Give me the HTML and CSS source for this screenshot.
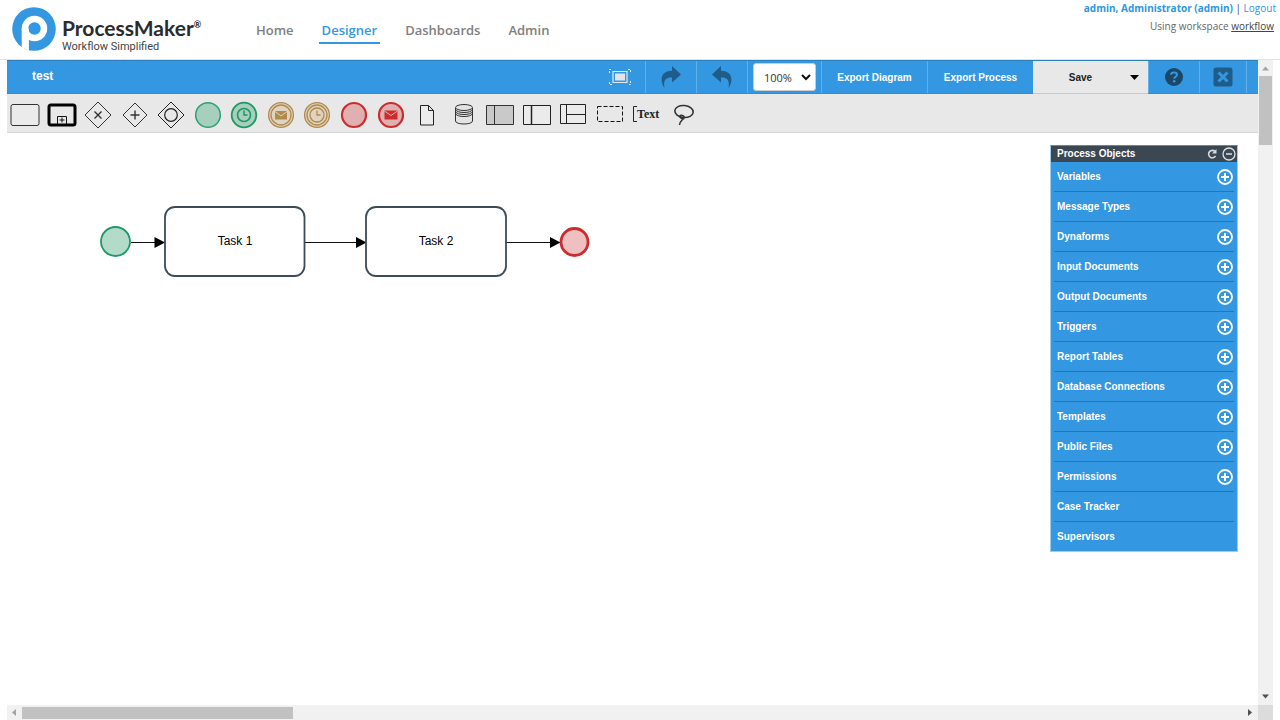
FILE: index.html
```html
<!DOCTYPE html>
<html lang="en">
<head>
<meta charset="utf-8">
<title>ProcessMaker Designer</title>
<link rel="stylesheet" href="styles.css">
</head>
<body>
<header class="header">
  <a class="brand" href="#" aria-label="ProcessMaker home">
    <svg class="brand-mark" viewBox="0 0 44 44" aria-hidden="true">
      <circle cx="22" cy="22" r="21.8" fill="#3397e1"/>
      <circle cx="22.500" cy="21.500" r="9.500" fill="none" stroke="#fff" stroke-width="6.500"/>
      <path d="M9.700 21.500h7.200V43.500l-7.200-3z" fill="#fff"/>
    </svg>
    <span class="brand-text">
      <span class="brand-name">ProcessMaker<span class="brand-reg">®</span></span>
      <span class="brand-tag">Workflow Simplified</span>
    </span>
  </a>
  <nav class="nav">
    <a class="nav-link" href="#">Home</a>
    <a class="nav-link nav-active" href="#">Designer</a>
    <a class="nav-link" href="#">Dashboards</a>
    <a class="nav-link" href="#">Admin</a>
  </nav>
  <div class="account">
    <div><a class="account-user" href="#">admin, Administrator (admin)</a> | <a class="account-out" href="#">Logout</a></div>
    <div class="account-space">Using workspace <a class="account-flow" href="#">workflow</a></div>
  </div>
</header>

<main class="workspace">
  <div class="designer">
    <div class="bar">
      <h1 class="bar-title">test</h1>
      <button class="bar-btn bar-plain" aria-label="Full screen">
        <svg width="24" height="18" viewBox="0 0 24 18" fill="none" stroke="#dce9f4"><path d="M1.500 5V1.500H4M20 1.500h2.500V5M22.500 13v3.500H20M4 16.500H1.500V13" stroke-dasharray="2 1"/><path d="M5 3.500h14v11H5z" stroke-width="1.200"/><path d="M7 5.500h10v7H7z" fill="#e4e4e4" stroke="none"/></svg>
      </button>
      <button class="bar-btn" aria-label="Redo">
        <svg width="20" height="22" viewBox="0 0 20 22"><path fill="#205c89" d="M11 0l9 8.500-9 8v-5C5 11 2 14 3.500 22 -1 16-1.500 5 11 4.800z"/></svg>
      </button>
      <button class="bar-btn" aria-label="Undo">
        <svg width="20" height="22" viewBox="0 0 20 22"><path fill="#205c89" d="M9 0L0 8.500l9 8v-5c6-.5 9 2.500 7.500 10.500C21 16 21.500 5 9 4.800z"/></svg>
      </button>
      <div class="bar-zoom">
        <select class="zoom" aria-label="Zoom"><option>100%</option><option>75%</option><option>50%</option></select>
        <svg class="zoom-arrow" width="10" height="7" viewBox="0 0 10 7" aria-hidden="true"><path d="M1 1l4 4 4-4" fill="none" stroke="#111" stroke-width="2"/></svg>
      </div>
      <button class="bar-btn bar-wide">Export Diagram</button>
      <button class="bar-btn bar-wide">Export Process</button>
      <div class="save">
        <button class="save-main">Save</button>
        <button class="save-more" aria-label="More save options"><svg width="9" height="5" viewBox="0 0 9 5"><path d="M0 0h9L4.500 5z"/></svg></button>
      </div>
      <button class="bar-btn" aria-label="Help">
        <svg width="18" height="18" viewBox="0 0 18 18"><circle cx="9" cy="9" r="9" fill="#1c4767"/><path d="M6 6.700C6.200 3.600 12 3.600 12 6.800c0 2-2.800 2-2.800 4" fill="none" stroke="#3397e1" stroke-width="2"/><circle cx="9.200" cy="13.200" r="1.300" fill="#3397e1"/></svg>
      </button>
      <button class="bar-btn bar-close" aria-label="Close">
        <svg width="20" height="20" viewBox="0 0 20 20"><rect x=".5" y=".5" width="19" height="19" rx="2.500" fill="#205c89"/><path d="M5.500 5.500l9 9M14.500 5.500l-9 9" stroke="#3397e1" stroke-width="3"/></svg>
      </button>
      <div class="bar-end"></div>
    </div>

    <div class="palette">
      <button class="shape" aria-label="Task"><svg viewBox="0 0 30 30"><rect x="1" y="4.500" width="28" height="21" rx="2" fill="#ebebeb" stroke="#333"/></svg></button>
      <button class="shape" aria-label="Sub process"><svg viewBox="0 0 30 30"><rect x="2" y="5" width="26" height="20" rx="2" fill="none" stroke="#000" stroke-width="3"/><path d="M10.500 24v-7.500h9V24M15 17.500v5M12.500 20h5" fill="none" stroke="#111"/></svg></button>
      <button class="shape" aria-label="Exclusive gateway"><svg viewBox="0 0 30 30" fill="none" stroke="#333"><path d="M15 2l13 13-13 13L2 15z"/><path d="M11.500 11.500l7 7M18.500 11.500l-7 7" stroke-width="1.400"/></svg></button>
      <button class="shape" aria-label="Parallel gateway"><svg viewBox="0 0 30 30" fill="none" stroke="#333"><path d="M15 3l12 12-12 12L3 15z"/><path d="M15 10.500v9M10.500 15h9" stroke-width="1.400"/></svg></button>
      <button class="shape" aria-label="Inclusive gateway"><svg viewBox="0 0 30 30" fill="none" stroke="#222"><path d="M15 2l13 13-13 13L2 15z"/><circle cx="15" cy="15" r="6.300" stroke-width="1.200"/></svg></button>
      <button class="shape" aria-label="Start event"><svg viewBox="0 0 30 30"><circle cx="15" cy="15" r="12.300" fill="#a6cfbd" stroke="#2ba071" stroke-width="1.500"/></svg></button>
      <button class="shape" aria-label="Start timer event"><svg viewBox="0 0 30 30" fill="none" stroke="#1f9865"><circle cx="15" cy="15" r="12.300" fill="#a6cfbd" stroke-width="1.800"/><circle cx="15" cy="15" r="6.500" stroke-width="1.600"/><path d="M15 10.500V15h3.500" stroke-width="1.500"/></svg></button>
      <button class="shape" aria-label="Intermediate message event"><svg viewBox="0 0 30 30" fill="none" stroke="#b18a4d"><circle cx="15" cy="15" r="12.400" fill="#dfd4c0" stroke-width="1.300"/><circle cx="15" cy="15" r="10" stroke-width="1.300"/><path d="M9 11h12v8.500H9z" fill="#b18a4d" stroke="none"/><path d="M9 11.500l6 4.500 6-4.500" stroke="#dfd4c0"/></svg></button>
      <button class="shape" aria-label="Intermediate timer event"><svg viewBox="0 0 30 30" fill="none" stroke="#b18a4d"><circle cx="15" cy="15" r="12.400" fill="#dfd4c0" stroke-width="1.300"/><circle cx="15" cy="15" r="10" stroke-width="1.300"/><circle cx="15" cy="15" r="7" stroke-width="1.300"/><path d="M15 10.500V15h3.500" stroke-width="1.300"/></svg></button>
      <button class="shape" aria-label="End event"><svg viewBox="0 0 30 30"><circle cx="15" cy="15" r="12" fill="#e0afaf" stroke="#cb2d2f" stroke-width="2.200"/></svg></button>
      <button class="shape" aria-label="End message event"><svg viewBox="0 0 30 30"><circle cx="15" cy="15" r="12" fill="#e0afaf" stroke="#cb2d2f" stroke-width="2.200"/><path d="M8.500 10.500h13v9h-13z" fill="#cb2d2f"/><path d="M8.500 11l6.500 4.500 6.500-4.500" fill="none" stroke="#e0afaf"/></svg></button>
      <button class="shape" aria-label="Data object"><svg viewBox="0 0 30 30" fill="#ececec" stroke="#222"><path d="M8.500 5.500h8l5 5v14.500h-13zM16.500 5.500v5h5"/></svg></button>
      <button class="shape" aria-label="Data store"><svg viewBox="0 0 30 30" fill="#e3e3e3" stroke="#333"><path d="M6.500 8v13c0 4 17 4 17 0V8"/><ellipse cx="15" cy="7.500" rx="8.500" ry="3"/><path d="M6.500 9.500c1 4 16 4 17 0M6.500 11.500c1 4 16 4 17 0M6.500 13.500c1 4 16 4 17 0" fill="none"/></svg></button>
      <button class="shape" aria-label="Black box pool"><svg viewBox="0 0 30 30" fill="#c9c9c9" stroke="#333"><path d="M1.500 5.500h27v19h-27zM9.500 5.500v19"/></svg></button>
      <button class="shape" aria-label="Pool"><svg viewBox="0 0 30 30" fill="#ebebeb" stroke="#222"><path d="M1.500 5.500h27v19h-27z"/><path d="M9.500 5.500v19" stroke-width="1.500"/></svg></button>
      <button class="shape" aria-label="Lane"><svg viewBox="0 0 30 30" fill="#ebebeb" stroke="#222"><path d="M2.500 4.500h25v19h-25zM8.500 4.500v19M8.500 14.500h19"/></svg></button>
      <button class="shape" aria-label="Group"><svg viewBox="0 0 30 30"><path d="M2.500 6.500h25v15h-25z" fill="none" stroke="#111" stroke-dasharray="4 2"/></svg></button>
      <button class="shape shape-note" aria-label="Text annotation"><svg class="note-bracket" viewBox="0 0 4 17"><path d="M4 .5H.5v15H4" fill="none" stroke="#222"/></svg>Text</button>
      <button class="shape" aria-label="Lasso"><svg viewBox="0 0 30 30" fill="none" stroke="#333" stroke-width="1.600"><ellipse cx="16" cy="11.500" rx="9.200" ry="6" transform="rotate(6 16 11.500)"/><path d="M16.500 18.500c-3 .5-5-1-4.500-2.500s4.500-.5 4 1.500-4.500 3.500-4.500 7.500"/></svg></button>
    </div>

    <div class="canvas">
      <svg class="diagram" width="600" height="160" viewBox="0 0 600 160" role="img" aria-label="Process diagram">
        <path d="M124 109.500h34M298 109.500h61M499 109.500h54" stroke="#111"/>
        <path d="M147.500 104l10.500 5.500-10.500 5.500zM349 104l10.500 5.500-10.500 5.500zM543 104l10.500 5.500-10.500 5.500z"/>
        <circle cx="108.500" cy="108.500" r="14.500" fill="#b2dbca" stroke="#209968" stroke-width="1.800"/>
        <rect x="158" y="74" width="139.500" height="69" rx="10" fill="#fff" stroke="#3e4b58" stroke-width="1.800"/>
        <rect x="359" y="74" width="140" height="69" rx="10" fill="#fff" stroke="#3e4b58" stroke-width="1.800"/>
        <circle cx="567.500" cy="109" r="13.500" fill="#eec0c2" stroke="#cb2d2f" stroke-width="2.800"/>
        <text class="task" x="228" y="112">Task 1</text>
        <text class="task" x="429" y="112">Task 2</text>
      </svg>

      <aside class="panel">
        <div class="panel-head">
          <h2 class="panel-title">Process Objects</h2>
          <button class="icon-btn" aria-label="Refresh"><svg width="10" height="10" viewBox="0 0 10 10"><path d="M8 2.500A3.700 3.700 0 1 0 8.500 7" fill="none" stroke="#d8dadd" stroke-width="1.600"/><path d="M9.500 0v4.500H5z" fill="#d8dadd"/></svg></button>
          <button class="icon-btn" aria-label="Collapse"><svg width="14" height="14" viewBox="0 0 14 14" fill="none" stroke="#dfe1e3"><circle cx="7" cy="7" r="6" stroke-width="1.300"/><path d="M4 7h6" stroke-width="1.500"/></svg></button>
        </div>
        <ul class="objects">
          <li class="object"><a href="#">Variables</a><button class="icon-btn" aria-label="Add variable"><svg class="plus"><use href="#plus"/></svg></button></li>
          <li class="object"><a href="#">Message Types</a><button class="icon-btn" aria-label="Add message type"><svg class="plus"><use href="#plus"/></svg></button></li>
          <li class="object"><a href="#">Dynaforms</a><button class="icon-btn" aria-label="Add dynaform"><svg class="plus"><use href="#plus"/></svg></button></li>
          <li class="object"><a href="#">Input Documents</a><button class="icon-btn" aria-label="Add input document"><svg class="plus"><use href="#plus"/></svg></button></li>
          <li class="object"><a href="#">Output Documents</a><button class="icon-btn" aria-label="Add output document"><svg class="plus"><use href="#plus"/></svg></button></li>
          <li class="object"><a href="#">Triggers</a><button class="icon-btn" aria-label="Add trigger"><svg class="plus"><use href="#plus"/></svg></button></li>
          <li class="object"><a href="#">Report Tables</a><button class="icon-btn" aria-label="Add report table"><svg class="plus"><use href="#plus"/></svg></button></li>
          <li class="object"><a href="#">Database Connections</a><button class="icon-btn" aria-label="Add database connection"><svg class="plus"><use href="#plus"/></svg></button></li>
          <li class="object"><a href="#">Templates</a><button class="icon-btn" aria-label="Add template"><svg class="plus"><use href="#plus"/></svg></button></li>
          <li class="object"><a href="#">Public Files</a><button class="icon-btn" aria-label="Add public file"><svg class="plus"><use href="#plus"/></svg></button></li>
          <li class="object"><a href="#">Permissions</a><button class="icon-btn" aria-label="Add permission"><svg class="plus"><use href="#plus"/></svg></button></li>
          <li class="object"><a href="#">Case Tracker</a></li>
          <li class="object"><a href="#">Supervisors</a></li>
        </ul>
      </aside>
    </div>
  </div>

  <div class="vscroll" aria-hidden="true">
    <svg class="vscroll-end" viewBox="0 0 15 15"><path d="M4 10h7L7.500 6z" fill="#a3a3a3"/></svg>
    <div class="vthumb"></div>
    <svg class="vscroll-end vscroll-down" viewBox="0 0 15 15"><path d="M4 5h7L7.500 9z" fill="#505050"/></svg>
  </div>
  <div class="hscroll" aria-hidden="true">
    <svg class="hscroll-end" viewBox="0 0 15 15"><path d="M9 4v7L5 7.500z" fill="#a3a3a3"/></svg>
    <div class="hthumb"></div>
    <svg class="hscroll-end hscroll-right" viewBox="0 0 15 15"><path d="M5 4v7l4-3.500z" fill="#505050"/></svg>
  </div>
  <div class="corner"></div>
</main>

<svg width="0" height="0" class="defs" aria-hidden="true">
  <symbol id="plus" viewBox="0 0 16 16"><circle cx="8" cy="8" r="7" fill="none" stroke="#fff" stroke-width="1.800"/><path d="M8 4v8M4 8h8" stroke="#fff" stroke-width="2"/></symbol>
</svg>
</body>
</html>
```

FILE: styles.css
```css
* { box-sizing: border-box; }

body {
  margin: 0;
  min-height: 100vh;
  display: flex;
  flex-direction: column;
  background: #fff;
  font-family: "Liberation Sans", Arial, sans-serif;
  font-size: 10px;
}

a { color: inherit; text-decoration: none; }

button {
  margin: 0;
  padding: 0;
  border: 0;
  background: none;
  color: inherit;
  font: inherit;
  cursor: pointer;
}

svg { display: block; }

.defs { position: absolute; }

/* Header */
.header {
  display: flex;
  height: 60px;
  padding-left: 12px;
  border-bottom: 1px solid #e3e3e3;
  font-family: "Open Sans", sans-serif;
}

.brand { display: flex; gap: 6px; padding-top: 7px; width: 232px; color: #2b2b2d; }
.brand-mark { width: 44px; height: 44px; }
.brand-text { display: flex; flex-direction: column; padding-top: 8px; font-family: Lato, sans-serif; }
.brand-name { display: flex; font-size: 21px; line-height: 25px; font-weight: 700; white-space: nowrap; }
.brand-reg { padding-top: 4px; font-size: 9px; line-height: 11px; }
.brand-tag { font-family: Roboto, sans-serif; font-size: 11px; line-height: 13px; color: #444; }

.nav { display: flex; align-items: flex-start; gap: 22px; padding-top: 20px; padding-left: 9px; }
.nav-link { padding: 0 3px 1px; font-size: 13px; line-height: 21px; color: #808080; font-weight: 600; }
.nav-active { color: #3397e1; border-bottom: 2px solid #3397e1; }

.account { margin-left: auto; padding: 0 4px 0 0; text-align: right; line-height: 16px; color: #444; }
.account-user { color: #2d98de; font-weight: 700; }
.account-out { color: #2d98de; }
.account-space { padding: 2px 2px 0 0; color: #666; }
.account-flow { color: #444; text-decoration: underline; }

/* Workspace */
.workspace {
  flex: 1;
  display: grid;
  grid-template: 1fr 15px / 1fr 15px;
  margin: 0 7px;
}

.designer { display: flex; flex-direction: column; min-width: 0; }

.bar {
  display: flex;
  height: 34px;
  background: #3397e1;
  border-top: 1px solid #2f7fbd;
  border-bottom: 1px solid #4489bd;
  color: #fff;
  font-weight: 700;
}

.bar-title { flex: 1; margin: 0; padding-left: 25px; font-size: 12px; line-height: 31px; }
.bar-btn {
  display: flex;
  align-items: center;
  justify-content: center;
  width: 51px;
  border-left: 1px solid #63b0ea;
}
.bar-plain { border-left: 0; width: 50px; }
.bar-wide { width: 106px; }
.bar-close { width: 47px; }
.bar-end { width: 12px; border-left: 1px solid #63b0ea; }

.bar-zoom { position: relative; width: 74px; padding: 2px 5px; border-left: 1px solid #63b0ea; }
.zoom {
  width: 100%;
  height: 28px;
  padding: 0 10px;
  appearance: none;
  border: 1px solid #ccc;
  border-radius: 3px;
  background: #fff;
  color: #333;
  font: 11px "Open Sans", sans-serif;
}
.zoom-arrow { position: absolute; right: 10px; top: 13px; pointer-events: none; }

.save { display: flex; width: 115px; margin-bottom: -1px; background: #e8e8e8; color: #222; border-bottom: 1px solid #c8c8c8; }
.save-main { flex: 1; padding-left: 8px; }
.save-more { display: flex; align-items: center; justify-content: center; width: 28px; }

.palette {
  display: grid;
  grid-template-columns: repeat(19, minmax(0, 1fr));
  height: 39px;
  padding-right: calc(100% - 694px);
  background: #e8e8e8;
  border-bottom: 1px solid #d6d6d6;
}
.shape { display: flex; align-items: center; justify-content: center; padding-top: 3px; }
.shape svg { flex: none; width: 30px; height: 30px; }
.shape-note { font: 700 12px "Liberation Serif", serif; color: #222; }
.shape .note-bracket { width: 4px; height: 17px; }

.canvas { position: relative; flex: 1; }
.task { font-size: 12px; text-anchor: middle; }

/* Process objects */
.panel {
  position: absolute;
  top: 12px;
  right: 20px;
  width: 188px;
  background: #3397e1;
  border: 1px solid #9ccdf0;
  border-top-color: #76828d;
  color: #fff;
  font-weight: 700;
}
.panel-head { display: flex; align-items: center; gap: 5px; height: 16px; padding: 0 1px 0 6px; background: #3b4753; }
.panel-title { flex: 1; margin: 0; font-size: 10px; line-height: 16px; }
.icon-btn { flex: none; }

.objects { list-style: none; margin: 0; padding: 0 3px; }
.object {
  display: flex;
  align-items: center;
  justify-content: space-between;
  height: 30px;
  padding: 0 1px 0 3px;
  border-bottom: 1px solid #2476b4;
}
.object:last-child { border-bottom: 0; height: 29px; }
.plus { width: 16px; height: 16px; }

/* Scroll bars */
.vscroll { display: flex; flex-direction: column; align-items: center; background: #f1f1f1; }
.vscroll-end { width: 15px; height: 16px; }
.vthumb { width: 13px; height: 69px; background: #c1c1c1; }
.vscroll-down { margin-top: auto; }
.hscroll { display: flex; align-items: center; background: #f1f1f1; }
.hscroll-end { width: 15px; height: 15px; }
.hthumb { width: 271px; height: 12px; background: #c1c1c1; }
.hscroll-right { margin-left: auto; }
.corner { background: #dcdcdc; }
```
